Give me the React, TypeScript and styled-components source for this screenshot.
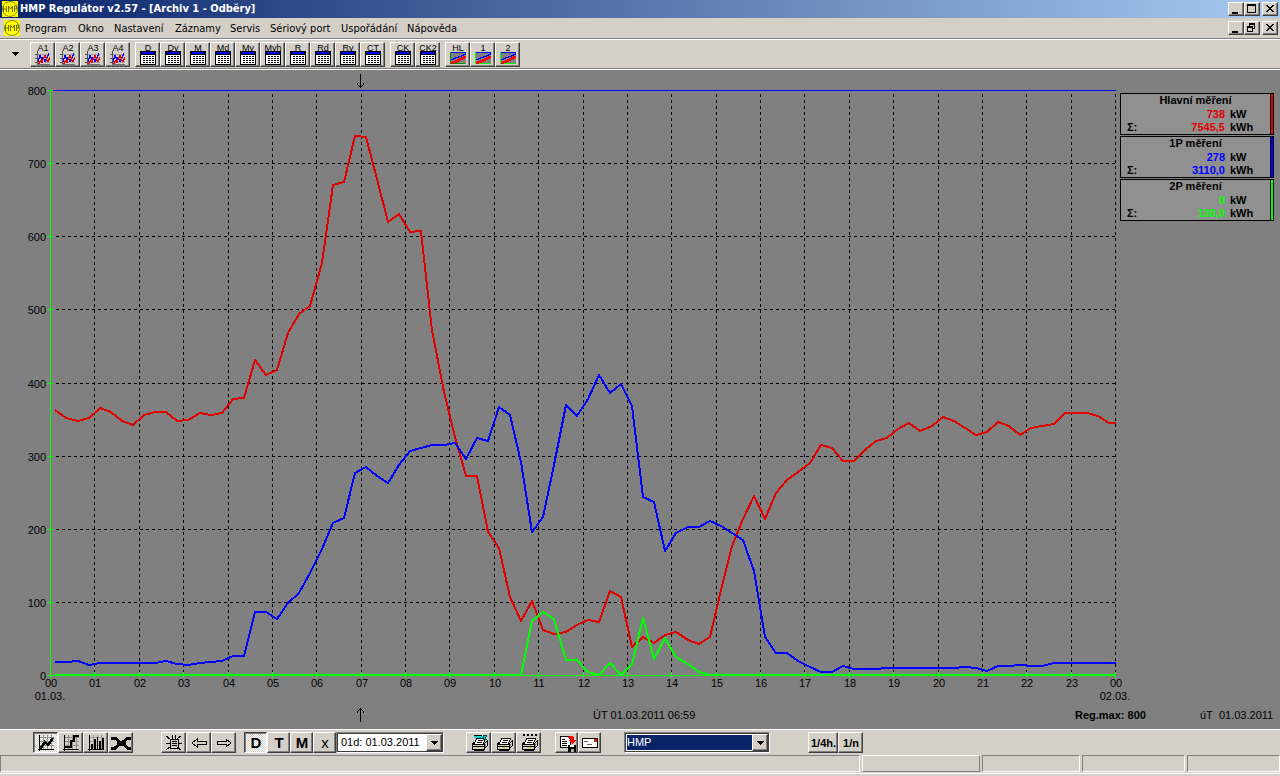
import React from "react";
import styled, { createGlobalStyle, css } from "styled-components";

const FACE = "#d4d0c8";
const SHADOW = "#808080";
const DARK = "#404040";
const UI_FONT = '"DejaVu Sans Condensed", "Liberation Sans", sans-serif';
const SYS_FONT = '"Liberation Sans", Arial, sans-serif';

const GlobalStyle = createGlobalStyle`
  *, *::before, *::after { box-sizing: border-box; }
  html, body { margin: 0; padding: 0; background: ${FACE}; }
  body { font-family: ${SYS_FONT}; font-size: 11px; color: #000; }
  button, select { font-family: inherit; font-size: inherit; color: inherit; margin: 0; }
`;

const raised = css`
  border: 1px solid;
  border-color: #fff ${DARK} ${DARK} #fff;
  box-shadow: inset -1px -1px 0 ${SHADOW};
`;
const sunken = css`
  border: 1px solid;
  border-color: ${SHADOW} #fff #fff ${SHADOW};
`;

const Window = styled.div`
  display: flex;
  flex-direction: column;
  min-height: 100vh;
  background: ${FACE};
`;

const TitleBar = styled.header`
  display: flex;
  align-items: center;
  height: 18px;
  padding: 0 2px;
  background: linear-gradient(90deg, #0a246a, #a6caf0);
`;
const Title = styled.h1`
  flex: 1;
  margin: 0 0 0 2px;
  color: #fff;
  font: bold 11px/18px ${UI_FONT};
  white-space: nowrap;
`;
const MenuBar = styled.nav`
  display: flex;
  align-items: center;
  height: 21px;
  padding: 0 2px 0 4px;
  border-bottom: 1px solid ${SHADOW};
`;
const MenuItems = styled.div`
  display: flex;
  flex: 1;
  font: 11px/18px ${UI_FONT};
`;
const MenuItem = styled.button<{ $w: number }>`
  min-width: ${(p) => p.$w}px;
  padding: 0 0 0 5px;
  border: 0;
  background: none;
  text-align: left;
  white-space: nowrap;
`;
const WindowButtons = styled.div`
  display: flex;
  & > :last-child { margin-left: 2px; }
`;
const WindowButton = styled.button`
  ${raised}
  display: block;
  width: 16px;
  height: 14px;
  padding: 0;
  background: ${FACE};
  & > svg { display: block; }
`;

const Toolbar = styled.div`
  display: flex;
  align-items: center;
  height: 30px;
  border-top: 1px solid #fff;
  border-bottom: 1px solid ${SHADOW};
  padding-left: 5px;
`;
const DropButton = styled.button`
  display: grid;
  place-items: center;
  width: 20px;
  height: 25px;
  padding: 0;
  margin-right: 5px;
  border: 0;
  background: none;
`;
const Group = styled.div<{ $after?: number }>`
  display: flex;
  margin-right: ${(p) => p.$after ?? 5}px;
`;
const ArchiveButton = styled.button`
  ${raised}
  display: flex;
  flex-direction: column;
  align-items: center;
  width: 25px;
  height: 25px;
  padding: 1px 0 0 1px;
  background: ${FACE};
  font-size: 9px;
  line-height: 9px;
  white-space: nowrap;
  & > svg { display: block; flex: none; }
`;
const ArchiveLabel = styled.span`
  display: block;
  height: 7px;
`;

const Workspace = styled.main`
  flex: 1;
  border-top: 1px solid #fff;
  border-bottom: 1px solid #fff;
  background: #808080;
`;
const ChartRow = styled.div`
  display: flex;
  align-items: flex-start;
`;
const ChartSvg = styled.svg`
  flex: 1;
  min-width: 0;
  display: block;
  overflow: visible;
  font: 11px ${SYS_FONT};
`;
const Legend = styled.aside`
  display: flex;
  flex-direction: column;
  gap: 1px;
  flex: 0 0 160px;
  padding: 23px 6px 0 0;
  font-weight: bold;
`;
const LegendCard = styled.section<{ $color: string }>`
  display: flex;
  height: 42px;
  border: 1px solid #000;
  background: #909090;
  &::after {
    content: "";
    width: 3px;
    border-left: 1px solid #000;
    background: ${(p) => p.$color};
  }
`;
const LegendBody = styled.div`
  flex: 1;
  line-height: 13px;
`;
const LegendTitle = styled.h2`
  margin: 0;
  padding-bottom: 1px;
  font-size: 11px;
  line-height: 13px;
  text-align: center;
`;
const LegendLine = styled.div`
  display: grid;
  grid-template-columns: 30px 1fr 40px;
  column-gap: 5px;
  padding-left: 6px;
  height: 13px;
`;
const LegendValue = styled.span<{ $color: string }>`
  color: ${(p) => p.$color};
  text-align: right;
`;

const Footer = styled.div`
  display: grid;
  grid-template-columns: 355fr 238fr 482fr 125fr 80fr;
  align-items: center;
  height: 24px;
  line-height: 16px;
  white-space: nowrap;
  & > svg { grid-column: 2; display: block; }
`;

const BottomBar = styled.div`
  display: flex;
  align-items: center;
  height: 25px;
  padding-left: 33px;
`;
const ToolButton = styled.button<{ $w: number; $pressed?: boolean; $big?: boolean; $light?: boolean }>`
  ${raised}
  display: flex;
  align-items: center;
  justify-content: center;
  width: ${(p) => p.$w}px;
  height: 21px;
  padding: 1px 0 0 1px;
  background: ${FACE};
  font-weight: ${(p) => (p.$light ? "normal" : "bold")};
  font-size: ${(p) => (p.$big ? 15 : 11)}px;
  line-height: 16px;
  & > svg { display: block; flex: none; }
  ${(p) =>
    p.$pressed &&
    css`
      border-color: ${DARK} #fff #fff ${DARK};
      box-shadow: inset 1px 1px 0 ${SHADOW};
      background: repeating-conic-gradient(#fff 0 25%, ${FACE} 0 50%) 0 0 / 2px 2px;
    `}
`;
const Combo = styled.label<{ $w: number; $after: number }>`
  ${sunken}
  position: relative;
  display: block;
  width: ${(p) => p.$w}px;
  height: 21px;
  margin-right: ${(p) => p.$after}px;
`;
const ComboSelect = styled.select<{ $selected?: boolean }>`
  appearance: none;
  display: block;
  width: 100%;
  height: 19px;
  padding: 0 18px 0 ${(p) => (p.$selected ? 1 : 3)}px;
  border: 1px solid ${DARK};
  border-radius: 0;
  outline: 0;
  line-height: 17px;
  background: #fff;
  ${(p) =>
    p.$selected &&
    css`
      color: #fff;
      background: #0a246a;
      box-shadow: inset 0 0 0 1px #fff;
    `}
`;
const ComboArrow = styled.span`
  ${raised}
  position: absolute;
  top: 1px;
  right: 1px;
  width: 16px;
  height: 17px;
  display: flex;
  align-items: center;
  justify-content: center;
  background: ${FACE};
  pointer-events: none;
`;

const StatusBar = styled.footer`
  display: grid;
  grid-template-columns: 860fr 118fr 98fr 103fr 93fr;
  gap: 2px;
  height: 19px;
  padding-bottom: 2px;
  border-bottom: 1px solid #fff;
  margin-bottom: 2px;
`;
const StatusPane = styled.div<{ $raised?: boolean }>`
  ${sunken}
  height: 17px;
  ${(p) => p.$raised && css`border-color: #fff ${SHADOW} ${SHADOW} #fff;`}
`;

/* ---------- icons ---------- */

const Pix = ({ w, h, children }: { w: number; h: number; children: React.ReactNode }) => (
  <svg width={w} height={h} viewBox={`0 0 ${w} ${h}`} shapeRendering="crispEdges" fill="none" aria-hidden="true">
    {children}
  </svg>
);

const Logo = () => (
  <svg width="16" height="16" viewBox="0 0 16 16" aria-hidden="true">
    <rect width="16" height="16" fill="#ffff00" />
    <circle cx="8" cy="8" r="7.5" fill="#ffff00" stroke="#8a8a00" strokeWidth="1" />
    <path
      d="M1.5 5v6M4.5 5v6M1.5 8h3M6.500 11v-6l2 3 2-3v6M12.500 11v-6h2v3h-2"
      stroke="#707000"
      strokeWidth="1"
      fill="none"
    />
  </svg>
);

const DownArrow = () => (
  <Pix w={7} h={4}>
    <path d="M0 0h7v1H0zM1 1h5v1H1zM2 2h3v1H2zM3 3h1v1H3z" fill="#000" />
  </Pix>
);

const GraphIcon = () => (
  <Pix w={16} h={16}>
    <path d="M2 3h13v1H2zM2 7h13v1H2zM2 11h13v1H2z" fill="#a0a0a0" />
    <path d="M2 0h1v14H2zM0 3h2v1H0zM0 7h2v1H0zM0 11h2v1H0z" fill="#505050" />
    <path d="M1 14h1v2H1zM3 14h1v1H3zM5 14h1v2H5zM7 14h1v1H7zM9 14h1v2H9zM11 14h1v1h-1zM13 14h1v2h-1zM2 13h13v1H2z" fill="#707070" />
    <path d="M3 11V7h1V4h1v2h1v2h1V6h1v2h1v2h1V8h1V6h1V4h1V2h1" stroke="#0000ff" />
    <path d="M3 12h1v-2h1V9h1v2h1V8h1V6h1V4h1v2h1v3h1v1h1V8h1V6h1" stroke="#e80000" />
  </Pix>
);

const TableIcon = () => (
  <Pix w={16} h={14}>
    <path d="M0 0h16v14H0z" fill="#000" />
    <path d="M2 1h12v2H2z" fill="#0000ff" />
    <path d="M1 4h14v9H1z" fill="#fff" />
    <path
      d="M3 5h2v1H3zM6 5h2v1H6zM9 5h2v1H9zM12 5h2v1h-2zM3 7h2v1H3zM6 7h2v1H6zM9 7h2v1H9zM12 7h2v1h-2zM3 9h2v1H3zM6 9h2v1H6zM9 9h2v1H9zM12 9h2v1h-2zM3 11h2v1H3zM6 11h2v1H6zM9 11h2v1H9zM12 11h2v1h-2z"
      fill="#000"
    />
  </Pix>
);

const TrendIcon = ({ frame }: { frame: boolean }) => (
  <Pix w={16} h={14}>
    <path d="M1 1h15v12H1z" fill="#808080" />
    <path d="M0 1h16v1H0z" fill="#0000ff" />
    <path d="M0 1h1v12H0z" fill={frame ? "#00ff00" : "#009000"} />
    <path d="M0 12h15v1H0z" fill={frame ? "#00ff00" : "#009000"} />
    <path d="M1 8h2V7h2V6h3V5h3V4h2V3h2V2h1" stroke="#0000ff" />
    <path d="M1 12h2v-1h3v-1h2V9h2V8h2V7h2V6h2" stroke="#ff0000" strokeWidth="2" />
  </Pix>
);

const GRID16 = "M1 2h15v1H1zM1 6h15v1H1zM1 10h15v1H1zM5 0h1v15H5zM9 0h1v15H9zM13 0h1v15h-1z";
const AXES16 = "M1 0h1v16H1zM0 14h16v1H0z";

const LineModeIcon = () => (
  <Pix w={16} h={16}>
    <path d={GRID16} fill="#909090" />
    <path d={AXES16} fill="#000" />
    <path d="M1 13h2l4-6 3 3 5-7" stroke="#000" strokeWidth="2.500" />
  </Pix>
);
const StepModeIcon = () => (
  <Pix w={16} h={16}>
    <path d={GRID16} fill="#909090" />
    <path d={AXES16} fill="#000" />
    <path d="M2 12h6V6h3V1h5" stroke="#000" strokeWidth="2" />
  </Pix>
);
const BarModeIcon = () => (
  <Pix w={16} h={16}>
    <path d={GRID16} fill="#a0a0a0" />
    <path d={AXES16} fill="#000" />
    <path d="M3 9h2v5H3zM6 4h2v10H6zM9 2h1v12H9zM11 6h2v8h-2zM14 3h2v11h-2z" fill="#000" />
  </Pix>
);
const CrossModeIcon = () => (
  <Pix w={20} h={14}>
    <path d="M0 2h4l5 4h3l5-4h3M0 12h4l5-4h3l5 4h3" stroke="#000" strokeWidth="3" />
    <path d="M6 6h9v2H6z" fill="#000" />
  </Pix>
);
const RefreshIcon = () => (
  <Pix w={16} h={16}>
    <path d="M4 4h8v9H4z" fill={FACE} stroke="#000" />
    <path d="M6 6h5M6 8h5M6 10h5" stroke="#000" />
    <path d="M0 1l4 3M15 1l-4 3M0 15l4-3M15 15l-4-3M6 0l1 4M10 0L9 4M0 8h4M12 8h4" stroke="#000" />
  </Pix>
);
const ArrowIcon = ({ right }: { right?: boolean }) => (
  <Pix w={16} h={10}>
    <path
      d={right ? "M15 5L10 1v2H1v3h9v3z" : "M1 5l5-4v2h9v3H6v3z"}
      fill={FACE}
      stroke="#000"
    />
  </Pix>
);
const PrinterIcon = ({ kind }: { kind: "color" | "plain" | "list" }) => (
  <Pix w={17} h={18}>
    {kind === "list" && <path d="M2 0h2v2H2zM6 0h2v2H6zM10 0h2v2h-2zM14 0h2v2h-2z" fill="#000" />}
    <path d="M6 4h9l-3 6H3z" fill="#fff" stroke="#000" />
    <path d="M7 6h5M6 8h5" stroke="#000" />
    <path d="M1 10h12v5H1z" fill={FACE} stroke="#000" />
    <path d="M1 10l3-2M13 10l3-3v5l-3 3" stroke="#000" />
    <path d="M14 10h1v3h-1z" fill="#808080" />
    <path d="M2 12h11v1H2z" fill="#000" />
    <path d="M7 13h3v1H7z" fill="#d8d800" />
    <path d="M3 16h10v1H3z" fill="#000" />
    {kind === "color" && (
      <>
        <path d="M3 2h9v2H3z" fill="#00d0d0" />
        <path d="M12 1l4 1-2 2 2 2-4-1z" fill="#00d0d0" stroke="#004848" />
        <path d="M3 1h8M5 4h6" stroke="#000" />
      </>
    )}
  </Pix>
);
const ExportIcon = () => (
  <Pix w={17} h={17}>
    <path d="M1 1h7l3 3v8H1z" fill="#fff" stroke="#000" />
    <path d="M3 4h3M3 6h5M3 8h5M3 10h5" stroke="#000" />
    <path d="M9 1h3c2 0 3 1 3 4h2l-4 4-3-4h2c0-2-1-2-3-2z" fill="#ff0000" />
    <path d="M9 10h8v7H9z" fill="#000" />
    <path d="M11 10h4v2h-4z" fill="#fff" />
    <path d="M12 14h3v3h-3z" fill="#b0b0b0" />
  </Pix>
);
const MailIcon = () => (
  <Pix w={16} h={10}>
    <path d="M0 0h16v10H0z" fill="#000" />
    <path d="M1 1h14v8H1z" fill="#fff" />
    <path d="M2 3h4v1H2zM5 6h5v1H5z" fill="#606060" />
    <path d="M12 1h3v3h-3z" fill="#ff0000" />
    <path d="M13 2h1v2h-1z" fill="#00a000" />
  </Pix>
);

const MinimizeGlyph = () => (
  <Pix w={14} h={12}><path d="M3 9h6v2H3z" fill="#000" /></Pix>
);
const MaximizeGlyph = () => (
  <Pix w={14} h={12}><path fillRule="evenodd" d="M2 1h9v9H2zM3 3h7v6H3z" fill="#000" /></Pix>
);
const RestoreGlyph = () => (
  <Pix w={14} h={12}>
    <path fillRule="evenodd" d="M4 1h6v6H4zM5 3h4v3H5z" fill="#000" />
    <path d="M2 4h6v6H2z" fill="#000" />
    <path d="M3 6h4v3H3z" fill={FACE} />
  </Pix>
);
const CloseGlyph = () => (
  <Pix w={14} h={12}>
    <path
      d="M3 2h2v1H3zM9 2h2v1H9zM4 3h2v1H4zM8 3h2v1H8zM5 4h4v1H5zM6 5h2v1H6zM5 6h4v1H5zM4 7h2v1H4zM8 7h2v1H8zM3 8h2v1H3zM9 8h2v1H9z"
      fill="#000"
    />
  </Pix>
);

/* ---------- chart ---------- */

const LEFT = 50;
const TOP = 90;
const BASE = 675;
const RIGHT = 1115;
const hourX = (h: number) => Math.round(LEFT + 44.375 * h);
const levelY = (v: number) => Math.round(674.95 - 0.731 * v);

const fill = (n: number, y: number) => Array<number>(n).fill(y);

/* One sample per quarter hour, as heights on the chart. */
const MAIN = [
  410, 418, 421, 418, 408, 412, 421, 425, 415, 412, 412, 421, 420, 413, 415, 413, 399, 398, 360, 375, 370, 333, 314,
  306, 263, 185, 182, 136, 137, 179, 222, 214, 232, 231, 330, 392, 437, 476, 476, 532, 548, 597, 621, 601, 630, 634,
  632, 625, 620, 622, 591, 597, 647, 637, 643, 635, 632, 640, 644, 637, 590, 546, 519, 496, 519, 493, 480, 472, 463,
  445, 448, 461, 461, 450, 441, 438, 429, 423, 431, 426, 417, 421, 428, 435, 432, 422, 426, 435, 428, 426, 424, 413,
  413, 413, 416, 423,
];
const FIRST = [
  662, 662, 661, 665, 663, 663, 663, 663, 663, 663, 661, 664, 665, 663, 662, 661, 656, 656, 612, 612, 619, 603, 593,
  573, 549, 523, 518, 473, 467, 476, 483, 465, 451, 448, 445, 445, 443, 459, 438, 441, 407, 415, 462, 532, 517, 465,
  405, 416, 399, 375, 393, 384, 406, 497, 502, 551, 533, 527, 527, 521, 526, 533, 540, 571, 637, 653, 653, 661, 667,
  672, 672, 666, 669, 669, 669, 668, 668, 668, 668, 668, 668, 668, 667, 668, 671, 666, 666, 665, 666, 666, 663, 663,
  663, 663, 663, 663,
];
const SECOND = [
  ...fill(43, 675), 621, 612, 619, 660, 660, 672, 675, 663, 675, 664, 618, 659, 638, 657, 664, 672, ...fill(37, 675),
];

const toPoints = (ys: number[]) =>
  [...ys.map((y, i) => `${Math.round(55.4 + 11.09 * i)},${y}`), `${RIGHT + 1},${ys[ys.length - 1]}`].join(" ");

const hours = Array.from({ length: 25 }, (_, i) => i);
const levels = Array.from({ length: 9 }, (_, i) => i * 100);
const pad = (n: number) => String(n % 24).padStart(2, "0");

const Chart = () => (
  <ChartSvg viewBox="0 70 1120 633" role="img" aria-label="Odběry 01.03.2011">
    <g shapeRendering="crispEdges" fill="none">
      <g stroke="#000" strokeDasharray="3 3" transform="translate(0.5 0.5)">
        {hours.slice(1).map((h) => (
          <line key={h} x1={hourX(h)} x2={hourX(h)} y1={93} y2={672} />
        ))}
        {levels.slice(1, 8).map((v) => (
          <line key={v} x1={55} x2={RIGHT} y1={levelY(v)} y2={levelY(v)} />
        ))}
      </g>
      <rect x={51} y={TOP} width={RIGHT - 50} height="1" fill="#0000ff" />
      <g fill="#00ff00">
        <rect x={50} y={TOP} width="1" height={BASE - TOP} />
        <rect x={47} y={BASE} width={RIGHT - 46} height="1" />
        {levels.map((v) => (
          <rect key={v} x={47} y={levelY(v)} width="6" height="1" />
        ))}
      </g>
      <g strokeWidth="2" strokeLinejoin="round">
        <polyline points={toPoints(MAIN)} stroke="#e00000" />
        <polyline points={toPoints(FIRST)} stroke="#0000ff" />
        <polyline points={toPoints(SECOND)} stroke="#00ff00" />
      </g>
      <g fill="#00ff00">
        {hours.map((h) => (
          <rect key={h} x={hourX(h)} y={672} width="1" height="6" />
        ))}
      </g>
      <path d="M360 74h1v14h-1zM359 86h3v1h-3zM358 85h1v1h-1zM362 85h1v1h-1zM357 83h1v2h-1zM363 83h1v2h-1z" fill="#000" />
    </g>
    <g textAnchor="end">
      {levels.map((v) => (
        <text key={v} x={46} y={levelY(v) + 5}>{v}</text>
      ))}
    </g>
    <g textAnchor="middle">
      {hours.map((h) => (
        <text key={h} x={hourX(h) + 1} y={687}>{pad(h)}</text>
      ))}
      <text x={50} y={700}>01.03.</text>
      <text x={1115} y={700}>02.03.</text>
    </g>
  </ChartSvg>
);

const meters = [
  { name: "Hlavní měření", kw: "738", kwh: "7545,5", color: "#e00000" },
  { name: "1P měření", kw: "278", kwh: "3110,0", color: "#0000ff" },
  { name: "2P měření", kw: "0", kwh: "130,0", color: "#00ff00" },
];

const menu: [string, number][] = [
  ["Program", 53],
  ["Okno", 36],
  ["Nastavení", 61],
  ["Záznamy", 55],
  ["Servis", 40],
  ["Sériový port", 71],
  ["Uspořádání", 66],
  ["Nápověda", 60],
];

const WindowControls = ({ child }: { child?: boolean }) => (
  <WindowButtons>
    <WindowButton aria-label="Minimalizovat"><MinimizeGlyph /></WindowButton>
    <WindowButton aria-label={child ? "Obnovit" : "Maximalizovat"}>
      {child ? <RestoreGlyph /> : <MaximizeGlyph />}
    </WindowButton>
    <WindowButton aria-label="Zavřít"><CloseGlyph /></WindowButton>
  </WindowButtons>
);

const Archive = ({ label, children }: { label: string; children: React.ReactNode }) => (
  <ArchiveButton>
    <ArchiveLabel>{label}</ArchiveLabel>
    {children}
  </ArchiveButton>
);

export default function App() {
  return (
    <Window>
      <GlobalStyle />
      <TitleBar>
        <Logo />
        <Title>HMP Regulátor v2.57 - [Archiv 1 - Odběry]</Title>
        <WindowControls />
      </TitleBar>
      <MenuBar>
        <Logo />
        <MenuItems>
          {menu.map(([name, w]) => (
            <MenuItem key={name} $w={w}>{name}</MenuItem>
          ))}
        </MenuItems>
        <WindowControls child />
      </MenuBar>
      <Toolbar>
        <DropButton aria-label="Další"><DownArrow /></DropButton>
        <Group>
          {["A1", "A2", "A3", "A4"].map((l) => (
            <Archive key={l} label={l}><GraphIcon /></Archive>
          ))}
        </Group>
        <Group>
          {["D", "Dv", "M", "Md", "Mv", "Mvh", "R", "Rd", "Rv", "CT"].map((l) => (
            <Archive key={l} label={l}><TableIcon /></Archive>
          ))}
        </Group>
        <Group>
          {["CK", "CK2"].map((l) => (
            <Archive key={l} label={l}><TableIcon /></Archive>
          ))}
        </Group>
        <Group>
          {["HL", "1", "2"].map((l) => (
            <Archive key={l} label={l}><TrendIcon frame={l !== "HL"} /></Archive>
          ))}
        </Group>
      </Toolbar>
      <Workspace>
        <ChartRow>
          <Chart />
          <Legend>
            {meters.map((m) => (
              <LegendCard key={m.name} $color={m.color}>
                <LegendBody>
                  <LegendTitle>{m.name}</LegendTitle>
                  <LegendLine>
                    <span />
                    <LegendValue $color={m.color}>{m.kw}</LegendValue>
                    <span>kW</span>
                  </LegendLine>
                  <LegendLine>
                    <span>Σ:</span>
                    <LegendValue $color={m.color}>{m.kwh}</LegendValue>
                    <span>kWh</span>
                  </LegendLine>
                </LegendBody>
              </LegendCard>
            ))}
          </Legend>
        </ChartRow>
        <Footer>
          <Pix w={11} h={16}>
            <path d="M5 1h1v14H5zM4 2h3v1H4zM3 3h1v1H3zM7 3h1v1H7zM2 4h1v2H2zM8 4h1v2H8z" fill="#000" />
          </Pix>
          <span>ÚT 01.03.2011 06:59</span>
          <b>Reg.max: 800</b>
          <span>úT&nbsp; 01.03.2011</span>
        </Footer>
      </Workspace>
      <BottomBar>
        <Group $after={28}>
          <ToolButton $w={25} $pressed aria-label="Čára"><LineModeIcon /></ToolButton>
          <ToolButton $w={25} aria-label="Schody"><StepModeIcon /></ToolButton>
          <ToolButton $w={25} aria-label="Sloupce"><BarModeIcon /></ToolButton>
          <ToolButton $w={25} aria-label="Kříž"><CrossModeIcon /></ToolButton>
        </Group>
        <Group $after={8}>
          <ToolButton $w={25} aria-label="Obnovit data"><RefreshIcon /></ToolButton>
          <ToolButton $w={25} aria-label="Předchozí"><ArrowIcon /></ToolButton>
          <ToolButton $w={25} aria-label="Následující"><ArrowIcon right /></ToolButton>
        </Group>
        <Group $after={0}>
          <ToolButton $w={23} $big $pressed>D</ToolButton>
          <ToolButton $w={23} $big>T</ToolButton>
          <ToolButton $w={23} $big>M</ToolButton>
          <ToolButton $w={23} $big $light>x</ToolButton>
        </Group>
        <Combo $w={108} $after={22}>
          <ComboSelect aria-label="Datum" defaultValue="1">
            <option value="1">01d: 01.03.2011</option>
          </ComboSelect>
          <ComboArrow><DownArrow /></ComboArrow>
        </Combo>
        <Group $after={14}>
          <ToolButton $w={25} aria-label="Barevný tisk"><PrinterIcon kind="color" /></ToolButton>
          <ToolButton $w={25} aria-label="Tisk"><PrinterIcon kind="plain" /></ToolButton>
          <ToolButton $w={25} aria-label="Tisk seznamu"><PrinterIcon kind="list" /></ToolButton>
        </Group>
        <Group $after={23}>
          <ToolButton $w={23} aria-label="Export"><ExportIcon /></ToolButton>
          <ToolButton $w={23} aria-label="Poslat"><MailIcon /></ToolButton>
        </Group>
        <Combo $w={146} $after={38}>
          <ComboSelect aria-label="Objekt" $selected defaultValue="hmp">
            <option value="hmp">HMP</option>
          </ComboSelect>
          <ComboArrow><DownArrow /></ComboArrow>
        </Combo>
        <Group $after={0}>
          <ToolButton $w={30}>1/4h.</ToolButton>
          <ToolButton $w={25}>1/n</ToolButton>
        </Group>
      </BottomBar>
      <StatusBar>
        <StatusPane />
        <StatusPane $raised />
        <StatusPane />
        <StatusPane />
        <StatusPane />
      </StatusBar>
    </Window>
  );
}
